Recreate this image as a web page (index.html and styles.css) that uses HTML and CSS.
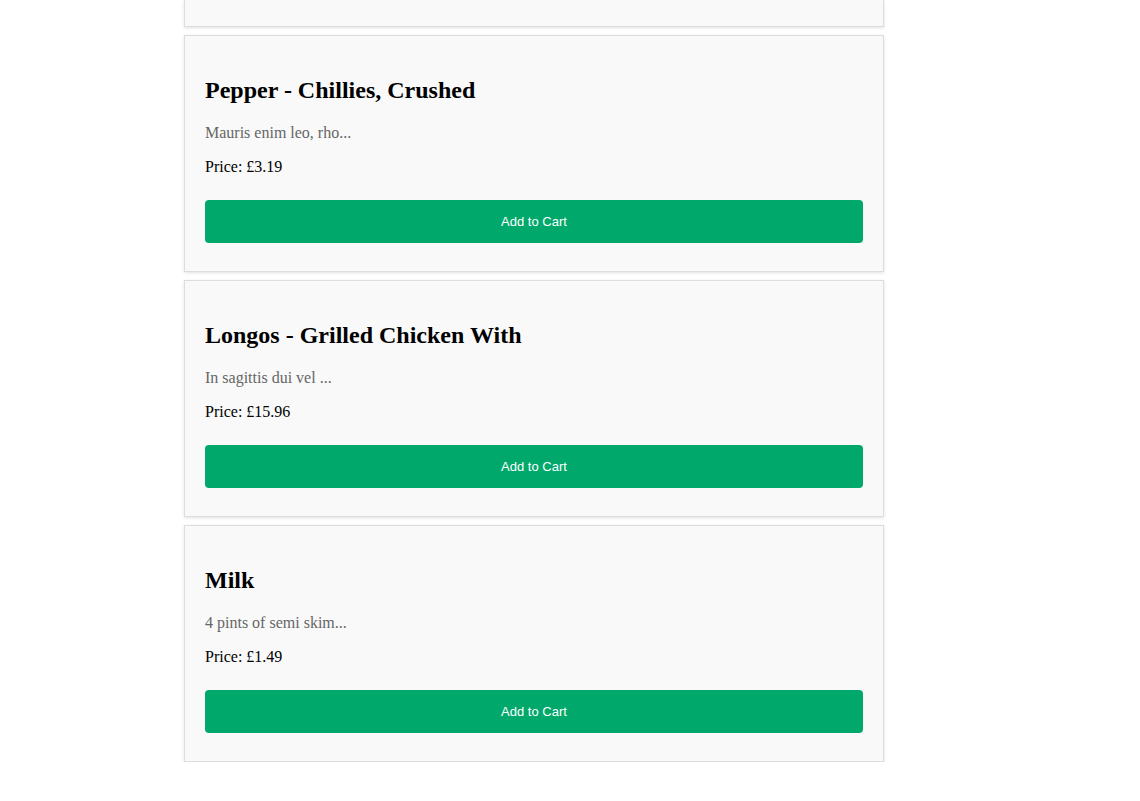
FILE: index.html
```html
<!DOCTYPE html>
<html>
<head>
<meta charset="utf-8">
<title>Products</title>
<link rel="stylesheet" href="styles.css">
</head>
<body>
<div class="page">
  <div class="list">
    <div class="card card-offscreen"></div>
    <div class="card">
      <h2 class="title">Pepper - Chillies, Crushed</h2>
      <p class="desc">Mauris enim leo, rho...</p>
      <p class="price">Price: £3.19</p>
      <button class="btn">Add to Cart</button>
    </div>
    <div class="card">
      <h2 class="title">Longos - Grilled Chicken With</h2>
      <p class="desc">In sagittis dui vel ...</p>
      <p class="price">Price: £15.96</p>
      <button class="btn">Add to Cart</button>
    </div>
    <div class="card">
      <h2 class="title">Milk</h2>
      <p class="desc">4 pints of semi skim...</p>
      <p class="price">Price: £1.49</p>
      <button class="btn">Add to Cart</button>
    </div>
  </div>
</div>
</body>
</html>
```
FILE: styles.css
```css
html, body {
  margin: 0;
  padding: 0;
  background: #ffffff;
  font-family: "Liberation Serif", "Times New Roman", serif;
}
.page {
  padding-left: 184px;
}
.list {
  width: 700px;
  display: flex;
  flex-direction: column;
  gap: 8px;
}
.card {
  box-sizing: border-box;
  height: 237px;
  padding: 21px 20px 20px;
  background: #f9f9f9;
  border: 1px solid #dddddd;
  box-shadow: 0 1px 3px rgba(0, 0, 0, 0.12);
  display: flow-root;
}
.card-offscreen {
  height: 27px;
  padding: 0;
  border-top: none;
}
.title {
  font-size: 24px;
  font-weight: bold;
  margin: 19.92px 0;
  color: #000;
}
.desc {
  font-size: 16px;
  color: #666666;
  margin: 16px 0;
}
.price {
  font-size: 16px;
  color: #000;
  margin: 16px 0;
}
.btn {
  display: block;
  width: 100%;
  margin: 24px 0 7px;
  padding: 14px 0;
  border: none;
  border-radius: 4px;
  background: #00a86b;
  color: #ffffff;
  font-family: "Liberation Sans", Arial, sans-serif;
  font-size: 13px;
  line-height: 15px;
  text-align: center;
  cursor: pointer;
}
```
